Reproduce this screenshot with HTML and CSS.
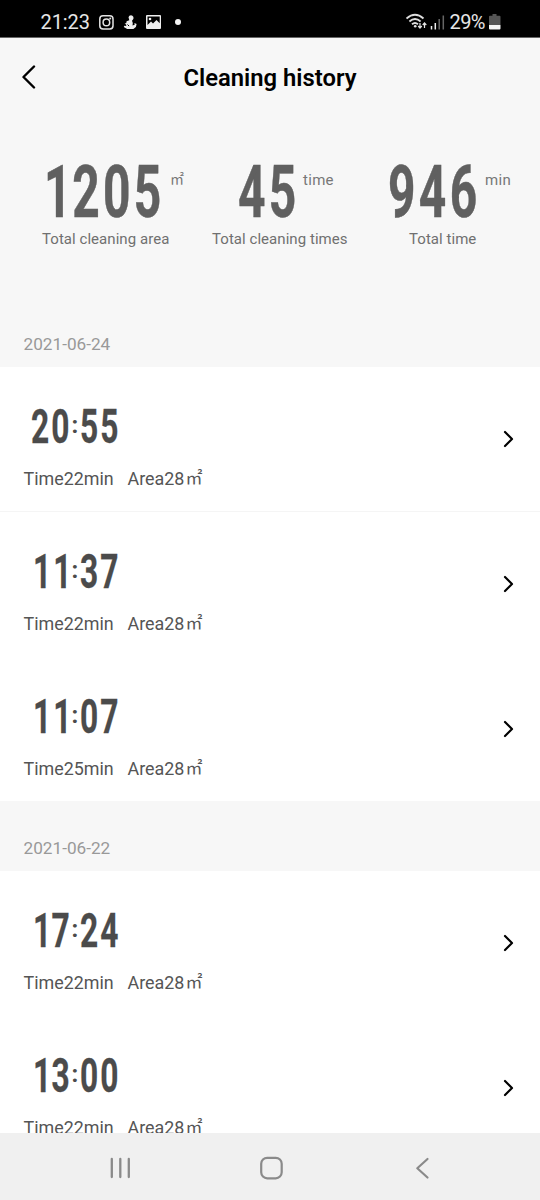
FILE: index.html
```html
<!DOCTYPE html>
<html lang="en">
<head>
<meta charset="utf-8">
<title>Cleaning history</title>
<link rel="stylesheet" href="styles.css">
</head>
<body>
<div class="screen">
  <div class="status">
    <span class="status-time">21:23</span>
    <svg class="status-icons" width="90" height="20" viewBox="0 0 90 20">
      <g fill="none" stroke="#e4e4e4" stroke-width="1.5"><rect x="1.8" y="3.800" width="13.200" height="13.200" rx="3.2"/><circle cx="8.4" cy="10.4" r="3.300"/></g>
      <circle cx="12.200" cy="6.600" r="1" fill="#e4e4e4"/>
      <path d="M33 3.200a2.600 2.600 0 0 1 2 4.200l-1 1.300.8 2.300-.3 2.500 2.200-.8-.3-1.800 2.200 1.200-.7 2.800-2.500 2.100h-6.200l-3.400-2 .5-1.200 2 .3-.2-1.700-1.500-.6 1.700-.9.300-1.700 2.700-1-.8-3A2.600 2.600 0 0 1 33 3.200z" fill="#eee"/>
      <path d="M29.500 12.500l1.600 1.600" stroke="#000" stroke-width="1"/>
      <path fill="#eee" fill-rule="evenodd" d="M49 3h13a1 1 0 0 1 1 1v12a1 1 0 0 1-1 1H49a1 1 0 0 1-1-1V4a1 1 0 0 1 1-1zm.5 1.500v8.500l3.500-3.500 2 2 3.500-3.500 3.200 3.200V4.500z"/>
      <circle cx="52" cy="7" r="1.300" fill="#eee"/>
      <circle cx="80" cy="10" r="3" fill="#f4f4f4"/>
    </svg>
    <svg class="signal" width="42" height="20" viewBox="0 0 42 20">
      <g fill="none" stroke="#dedede" stroke-width="1.800"><path d="M.5 6.500Q9 -1 17.500 6.500M3.400 9.500Q9 4.500 14.600 9.500M6 12.300Q9 9.700 12 12.300"/></g>
      <circle cx="9.200" cy="14.200" r="1.300" fill="#e4e4e4"/>
      <path d="M14 11v5m-1.800-2L14 16l1.800-2M18.500 16v-5m-1.800 2l1.800-2 1.800 2" fill="none" stroke="#e4e4e4" stroke-width="1.200"/>
      <path d="M25.500 14v3.500M29.300 11v6.500" stroke="#eee" stroke-width="1.500"/>
      <path d="M33.200 7v10.500M37.300 3.500V17.500" stroke="#666" stroke-width="1.500"/>
    </svg>
    <span class="percent">29%</span>
    <svg class="battery" width="12" height="20" viewBox="0 0 12 20"><path d="M3.500 2h4v1.700h3a1 1 0 0 1 1 1V13H0V4.700a1 1 0 0 1 1-1h2.500z" fill="#555"/><path d="M0 13h11.500v3.500a1 1 0 0 1-1 1H1a1 1 0 0 1-1-1z" fill="#f5f5f5"/></svg>
  </div>

  <header class="header">
    <svg class="back" width="16" height="26" viewBox="0 0 16 26"><path d="M13 1.500L2.500 12 13 22.500" fill="none" stroke="#000" stroke-width="2.400" stroke-linecap="round" stroke-linejoin="round"/></svg>
    <h1 class="title">Cleaning history</h1>
  </header>

  <section class="stats">
    <div class="stat stat-area"><div class="figure"><span class="big big-four"><span class="lead">1</span>205</span><span class="unit sq">㎡</span></div><div class="label">Total cleaning area</div></div>
    <div class="stat stat-times"><div class="figure"><span class="big big-two">45</span><span class="unit">time</span></div><div class="label">Total cleaning times</div></div>
    <div class="stat stat-total"><div class="figure"><span class="big big-three">946</span><span class="unit">min</span></div><div class="label">Total time</div></div>
  </section>

  <main class="history">
    <h2 class="date">2021-06-24</h2>
    <div class="row ruled">
      <div><div class="clock"><span class="pair">20</span><span class="colon">:</span><span class="pair">55</span></div><div class="meta"><span class="dur">Time22min</span><span>Area28</span><span class="m2">㎡</span></div></div>
      <svg class="go" width="12" height="18" viewBox="0 0 12 18"><path d="M2 2l7 7-7 7"/></svg>
    </div>
    <div class="row">
      <div><div class="clock"><span class="pair ones">11</span><span class="colon">:</span><span class="pair">37</span></div><div class="meta"><span class="dur">Time22min</span><span>Area28</span><span class="m2">㎡</span></div></div>
      <svg class="go" width="12" height="18" viewBox="0 0 12 18"><path d="M2 2l7 7-7 7"/></svg>
    </div>
    <div class="row last">
      <div><div class="clock"><span class="pair ones">11</span><span class="colon">:</span><span class="pair">07</span></div><div class="meta"><span class="dur">Time25min</span><span>Area28</span><span class="m2">㎡</span></div></div>
      <svg class="go" width="12" height="18" viewBox="0 0 12 18"><path d="M2 2l7 7-7 7"/></svg>
    </div>
    <h2 class="date later">2021-06-22</h2>
    <div class="row">
      <div><div class="clock"><span class="pair teens">17</span><span class="colon">:</span><span class="pair">24</span></div><div class="meta"><span class="dur">Time22min</span><span>Area28</span><span class="m2">㎡</span></div></div>
      <svg class="go" width="12" height="18" viewBox="0 0 12 18"><path d="M2 2l7 7-7 7"/></svg>
    </div>
    <div class="row">
      <div><div class="clock"><span class="pair teens">13</span><span class="colon">:</span><span class="pair">00</span></div><div class="meta"><span class="dur">Time22min</span><span>Area28</span><span class="m2">㎡</span></div></div>
      <svg class="go" width="12" height="18" viewBox="0 0 12 18"><path d="M2 2l7 7-7 7"/></svg>
    </div>
  </main>

  <nav class="nav">
    <svg width="24" height="24" viewBox="0 0 24 24"><path d="M3.800 3v18M12.300 3v18M20.800 3v18" stroke-width="2.300"/></svg>
    <svg width="24" height="24" viewBox="0 0 24 24"><rect x="1.200" y="1.800" width="20.500" height="20.500" rx="6"/></svg>
    <svg width="24" height="24" viewBox="0 0 24 24"><path d="M16.500 3L6.300 12.200 16.500 21.500"/></svg>
  </nav>
</div>
</body>
</html>
```
FILE: styles.css
```css
* { box-sizing: border-box; }
body { margin: 0; font-family: Roboto, "Noto Sans CJK SC", sans-serif; }
svg { display: block; flex: none; }
.screen { width: 540px; height: 1200px; display: flex; flex-direction: column; overflow: hidden; background: #f7f7f7; }
.status { flex: none; height: 38px; padding: 7px 39px 0 40.500px; display: flex; align-items: center; background: #000; border-bottom: 1px solid #666; color: #e6e6e6; font-size: 20px; line-height: 30px; }
.status-time { width: 57px; letter-spacing: -0.1px; }
.status svg { margin-top: -1px; }
.signal { margin-left: auto; margin-right: 2px; }
.percent { width: 39.500px; letter-spacing: -0.600px; }
.header { flex: none; height: 79px; padding-left: 20.500px; display: flex; align-items: center; }
.title { flex: 1; margin: 0 36.500px 0 0; padding-top: 1px; text-align: center; font-size: 23.800px; font-weight: 600; letter-spacing: 0; color: #000; }
.stats { flex: none; height: 204.500px; padding-top: 43px; display: grid; grid-template-columns: 190px 179px 171px; }
.figure { display: flex; height: 65px; }
.big { display: block; font-size: 71.500px; line-height: 65px; font-weight: 700; color: #606060; -webkit-text-stroke: 0.500px #606060; letter-spacing: 5px; transform: scaleX(0.670); transform-origin: left center; }
.big-four { width: 126px; }
.lead { letter-spacing: 1px; }
.big-two { width: 65.500px; }
.big-three { width: 97px; }
.stat-area .figure { padding-left: 44px; }
.stat-times .figure { padding-left: 47.500px; }
.stat-total .figure { padding-left: 19px; }
.unit { font-size: 15px; line-height: 20px; padding-top: 10px; color: #777; letter-spacing: 0.300px; }
.unit.sq { padding-top: 8px; font-family: "Noto Sans CJK SC", sans-serif; font-size: 14px; }
.label { font-size: 15px; line-height: 20px; margin-top: 4px; color: #707070; letter-spacing: 0.050px; }
.stat-area .label { padding-left: 42px; }
.stat-times .label { padding-left: 22px; }
.stat-total .label { padding-left: 40px; }
.history { flex: 1; min-height: 0; overflow: hidden; }
.date { height: 45px; margin: 0; padding-left: 23.500px; font-size: 17.200px; line-height: 45px; font-weight: 400; color: #999; }
.later { height: 70px; padding-top: 25px; }
.row { height: 145px; padding: 33px 25px 0 23.500px; background: #fff; display: flex; justify-content: space-between; }
.ruled { border-bottom: 1px solid #f5f5f5; }
.last { height: 144px; }
.clock { height: 54px; padding-left: 7.500px; display: flex; line-height: 54px; font-size: 48px; font-weight: 700; color: #4b4b4b; }
.pair { display: block; width: 41px; transform: scaleX(0.660); transform-origin: left center; letter-spacing: 3.300px; -webkit-text-stroke: 0.300px #4b4b4b; }
.ones { padding-left: 3px; }
.teens { padding-left: 3px; letter-spacing: 0.500px; }
.colon { width: 8px; font-size: 24px; line-height: 50px; text-indent: -0.500px; }
.meta { margin-top: 13px; display: flex; line-height: 24px; font-size: 17.900px; color: #555; }
.dur { width: 104px; }
.m2 { margin-top: -2px; margin-left: 1px; font-size: 17px; font-family: "Noto Sans CJK SC", sans-serif; }
.go { margin-top: 30px; fill: none; stroke: #000; stroke-width: 2.200; stroke-linecap: round; stroke-linejoin: round; }
.nav { flex: none; height: 67.500px; padding: 3px 105px 0 108px; display: flex; align-items: center; justify-content: space-between; background: #f0f0f0; }
.nav svg { fill: none; stroke: #8a8a8a; stroke-width: 2.200; stroke-linecap: round; stroke-linejoin: round; }
```
